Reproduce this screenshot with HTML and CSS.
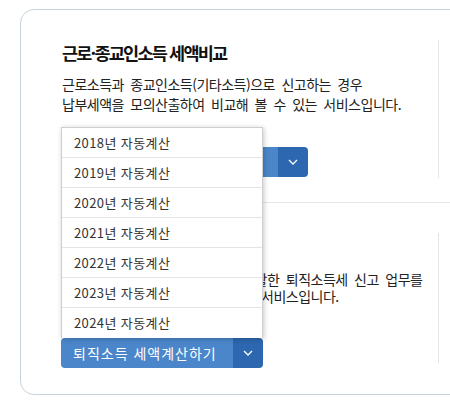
FILE: index.html
```html
<!DOCTYPE html>
<html lang="ko">
<head>
<meta charset="utf-8">
<link rel="stylesheet" href="styles.css">
</head>
<body>
<div class="card">
  <section class="item">
    <h2 class="title">근로·종교인소득 세액비교</h2>
    <p class="desc">근로소득과 종교인소득(기타소득)으로 신고하는 경우<br>납부세액을 모의산출하여 비교해 볼 수 있는 서비스입니다.</p>
    <div class="btn-group">
      <button class="btn-main btn-wide">근로·종교인소득 세액비교하기</button>
      <button class="btn-arrow" aria-label="메뉴"><svg width="10" height="6" viewBox="0 0 10 6"><path d="M1 1l4 4 4-4" fill="none" stroke="#fff" stroke-width="1.3"/></svg></button>
    </div>
  </section>
  <hr class="sep">
  <section class="item item-2">
    <h2 class="title">퇴직소득 세액계산</h2>
    <p class="desc desc-2">퇴직소득세액을 쉽게 계산하여 원활한 퇴직소득세 신고 업무를<br>지원하고 납세자 편의를 제공하는 서비스입니다.</p>
    <div class="btn-group">
      <button class="btn-main btn-narrow">퇴직소득 세액계산하기</button>
      <button class="btn-arrow" aria-label="메뉴"><svg width="10" height="6" viewBox="0 0 10 6"><path d="M1 1l4 4 4-4" fill="none" stroke="#fff" stroke-width="1.3"/></svg></button>
      <ul class="menu">
        <li>2018년 자동계산</li>
        <li>2019년 자동계산</li>
        <li>2020년 자동계산</li>
        <li>2021년 자동계산</li>
        <li>2022년 자동계산</li>
        <li>2023년 자동계산</li>
        <li>2024년 자동계산</li>
      </ul>
    </div>
  </section>
</div>
</body>
</html>
```
FILE: styles.css
```css
html, body {
  margin: 0;
  padding: 0;
  background: #fff;
  overflow: hidden;
}
body {
  width: 450px;
  height: 405px;
  font-family: "Noto Sans CJK KR", "Noto Sans", sans-serif;
  color: #222;
}
.card {
  box-sizing: border-box;
  margin: 9px 0 0 20px;
  width: 480px;
  height: 386px;
  border: 1px solid #c6d3dd;
  border-radius: 14px;
  padding: 30px 0 0 40px;
}
.item {
  box-sizing: border-box;
  width: 378px;
  height: 138px;
  border-right: 1px solid #e4e4e4;
  padding-top: 1px;
}
.item-2 {
  height: 130px;
  margin-top: 30px;
}
.title {
  margin: 0 0 0 1px;
  font-size: 17.5px;
  line-height: 24px;
  font-weight: 700;
  letter-spacing: -1.8px;
  color: #111;
}
.desc {
  margin: 9px 0 0 1px;
  font-size: 14px;
  line-height: 20px;
  letter-spacing: -0.5px;
  word-spacing: 3px;
  color: #222;
  white-space: nowrap;
}
.desc-2 {
  margin-top: 13px;
  line-height: 17px;
}
.btn-group {
  position: relative;
  display: flex;
  margin-top: 33px;
}
.btn-main {
  box-sizing: border-box;
  height: 30px;
  border: 0;
  border-radius: 4px 0 0 4px;
  background: #4a86c9;
  color: #fff;
  font-family: inherit;
  font-size: 14px;
  letter-spacing: 1px;
  text-align: left;
  padding: 0 0 0 12px;
  white-space: nowrap;
  overflow: hidden;
}
.btn-wide { width: 217px; }
.btn-narrow { width: 172px; }
.btn-arrow {
  width: 30px;
  height: 30px;
  border: 0;
  padding: 0;
  border-radius: 0 4px 4px 0;
  background: #2c67af;
  display: flex;
  align-items: center;
  justify-content: center;
}
.sep {
  margin: 24px 0 0 1px;
  border: 0;
  border-top: 1px solid #e6e6e6;
  height: 0;
}
.menu {
  position: absolute;
  left: 0;
  bottom: 30px;
  box-sizing: border-box;
  width: 202px;
  margin: 0;
  padding: 0;
  list-style: none;
  background: #fff;
  border: 1px solid #cfcfcf;
  border-bottom: 0;
  box-shadow: 1px 1px 5px rgba(0, 0, 0, 0.22);
}
.menu li {
  height: 30px;
  line-height: 29px;
  padding-left: 12px;
  font-size: 13px;
  letter-spacing: 0.4px;
  color: #333;
  border-bottom: 1px solid #e4e4e4;
  box-sizing: border-box;
}
.menu li:last-child {
  border-bottom: 0;
}
```
